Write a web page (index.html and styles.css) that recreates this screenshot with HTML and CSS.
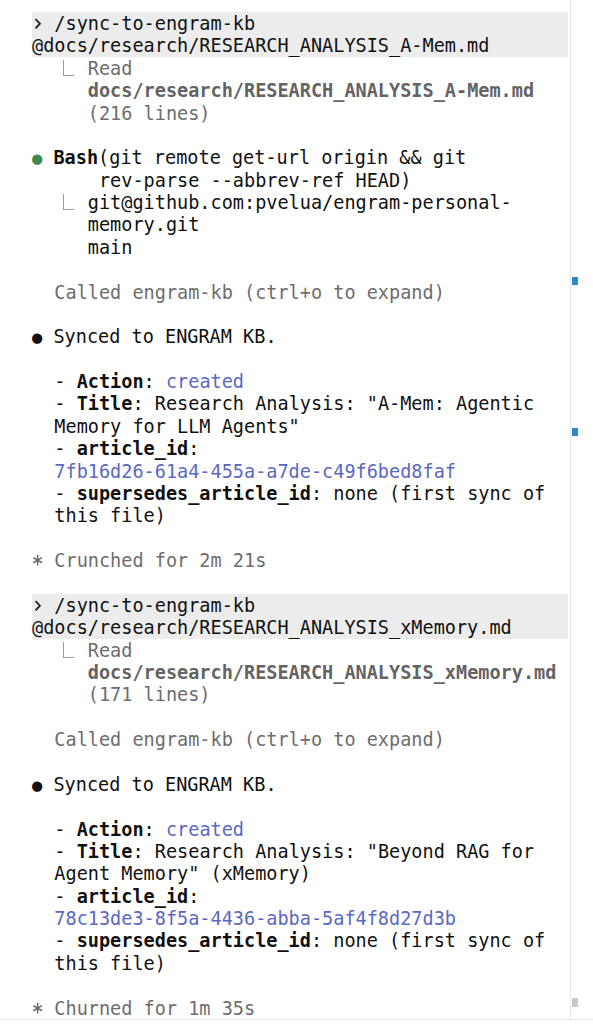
FILE: index.html
```html
<!DOCTYPE html>
<html lang="en">
<head>
<meta charset="utf-8">
<title>Terminal session</title>
<link rel="stylesheet" href="styles.css">
</head>
<body>
<div class="screen">
  <main class="term">
    <div class="prompt">
      <div class="line"><svg class="chev" viewBox="0 0 11 22" aria-hidden="true"><polyline points="3.5,7 7.8,11.5 3.5,16"/></svg> /sync-to-engram-kb</div>
      <div class="line">@docs/research/RESEARCH_ANALYSIS_A-Mem.md</div>
    </div>
    <div class="line dim"><span class="elbow"></span>Read</div>
    <div class="line dim">     <b>docs/research/RESEARCH_ANALYSIS_A-Mem.md</b></div>
    <div class="line dim">     (216 lines)</div>
    <div class="line"></div>
    <div class="line"><span class="dot green">●</span> <b>Bash</b>(git remote get-url origin &amp;&amp; git</div>
    <div class="line">      rev-parse --abbrev-ref HEAD)</div>
    <div class="line"><span class="elbow"></span>git@github.com:pvelua/engram-personal-</div>
    <div class="line">     memory.git</div>
    <div class="line">     main</div>
    <div class="line"></div>
    <div class="line dim">  Called engram-kb (ctrl+o to expand)</div>
    <div class="line"></div>
    <div class="line"><span class="dot">●</span> Synced to ENGRAM KB.</div>
    <div class="line"></div>
    <div class="line">  - <b>Action</b>: <span class="link">created</span></div>
    <div class="line">  - <b>Title</b>: Research Analysis: "A-Mem: Agentic</div>
    <div class="line">  Memory for LLM Agents"</div>
    <div class="line">  - <b>article_id</b>:</div>
    <div class="line">  <span class="link">7fb16d26-61a4-455a-a7de-c49f6bed8faf</span></div>
    <div class="line">  - <b>supersedes_article_id</b>: none (first sync of</div>
    <div class="line">  this file)</div>
    <div class="line"></div>
    <div class="line dim"><svg class="star" viewBox="0 0 11 22" aria-hidden="true"><path d="M5.5 6V16M1.2 8.5L9.8 13.5M1.2 13.5L9.8 8.5"/></svg> Crunched for 2m 21s</div>
    <div class="line"></div>
    <div class="prompt">
      <div class="line"><svg class="chev" viewBox="0 0 11 22" aria-hidden="true"><polyline points="3.5,7 7.8,11.5 3.5,16"/></svg> /sync-to-engram-kb</div>
      <div class="line">@docs/research/RESEARCH_ANALYSIS_xMemory.md</div>
    </div>
    <div class="line dim"><span class="elbow"></span>Read</div>
    <div class="line dim">     <b>docs/research/RESEARCH_ANALYSIS_xMemory.md</b></div>
    <div class="line dim">     (171 lines)</div>
    <div class="line"></div>
    <div class="line dim">  Called engram-kb (ctrl+o to expand)</div>
    <div class="line"></div>
    <div class="line"><span class="dot">●</span> Synced to ENGRAM KB.</div>
    <div class="line"></div>
    <div class="line">  - <b>Action</b>: <span class="link">created</span></div>
    <div class="line">  - <b>Title</b>: Research Analysis: "Beyond RAG for</div>
    <div class="line">  Agent Memory" (xMemory)</div>
    <div class="line">  - <b>article_id</b>:</div>
    <div class="line">  <span class="link">78c13de3-8f5a-4436-abba-5af4f8d27d3b</span></div>
    <div class="line">  - <b>supersedes_article_id</b>: none (first sync of</div>
    <div class="line">  this file)</div>
    <div class="line"></div>
    <div class="line dim"><svg class="star" viewBox="0 0 11 22" aria-hidden="true"><path d="M5.5 6V16M1.2 8.5L9.8 13.5M1.2 13.5L9.8 8.5"/></svg> Churned for 1m 35s</div>
  </main>
  <aside class="rail">
    <span class="mark blue m1"></span>
    <span class="mark blue m2"></span>
    <span class="mark grey m3"></span>
  </aside>
</div>
</body>
</html>
```
FILE: styles.css
```css
html, body {
  margin: 0;
  padding: 0;
  background: #ffffff;
}

.screen {
  display: flex;
  height: 1019px;
  border-bottom: 1px solid #e3e3e3;
  overflow: hidden;
}

.term {
  width: 570px;
  box-sizing: border-box;
  padding: 12px 2px 0 32px;
  display: flex;
  flex-direction: column;
  font-family: "DejaVu Sans Mono", "Liberation Mono", monospace;
  font-size: 18.55px;
  color: #111111;
}

.line {
  height: 22.4px;
  line-height: 23.4px;
  white-space: pre;
}

.prompt {
  background: #ececec;
  display: flex;
  flex-direction: column;
}

b {
  font-weight: bold;
}

.dim {
  color: #6d6d6d;
}

.dim b {
  color: #646464;
}

.link {
  color: #5a68c6;
}

.dot {
  display: inline-block;
  width: 1ch;
  text-align: center;
  font-size: 0.92em;
}

.dot.green {
  color: #3b8a4c;
}

.chev {
  display: inline-block;
  width: 1ch;
  height: 22.4px;
  vertical-align: top;
  fill: none;
  stroke: #222222;
  stroke-width: 1.8;
}

.star {
  display: inline-block;
  width: 1ch;
  height: 22.4px;
  vertical-align: top;
  fill: none;
  stroke: #6a6a6a;
  stroke-width: 1.5;
}

.elbow {
  display: inline-block;
  width: 5ch;
  height: 22.4px;
  vertical-align: top;
  position: relative;
}

.elbow::after {
  content: "";
  position: absolute;
  left: 31px;
  top: 3px;
  width: 10px;
  height: 15px;
  border-left: 1.5px solid #9a9a9a;
  border-bottom: 1.5px solid #9a9a9a;
}

.rail {
  flex: 1;
  border-left: 1px solid #e8e8e8;
  position: relative;
}

.mark {
  position: absolute;
  left: 1px;
  width: 6px;
  height: 8px;
}

.blue {
  background: #2f88cf;
}

.grey {
  background: #c9c9c9;
}

.m1 { top: 277px; }
.m2 { top: 428px; }
.m3 { top: 998px; height: 9px; }
```
